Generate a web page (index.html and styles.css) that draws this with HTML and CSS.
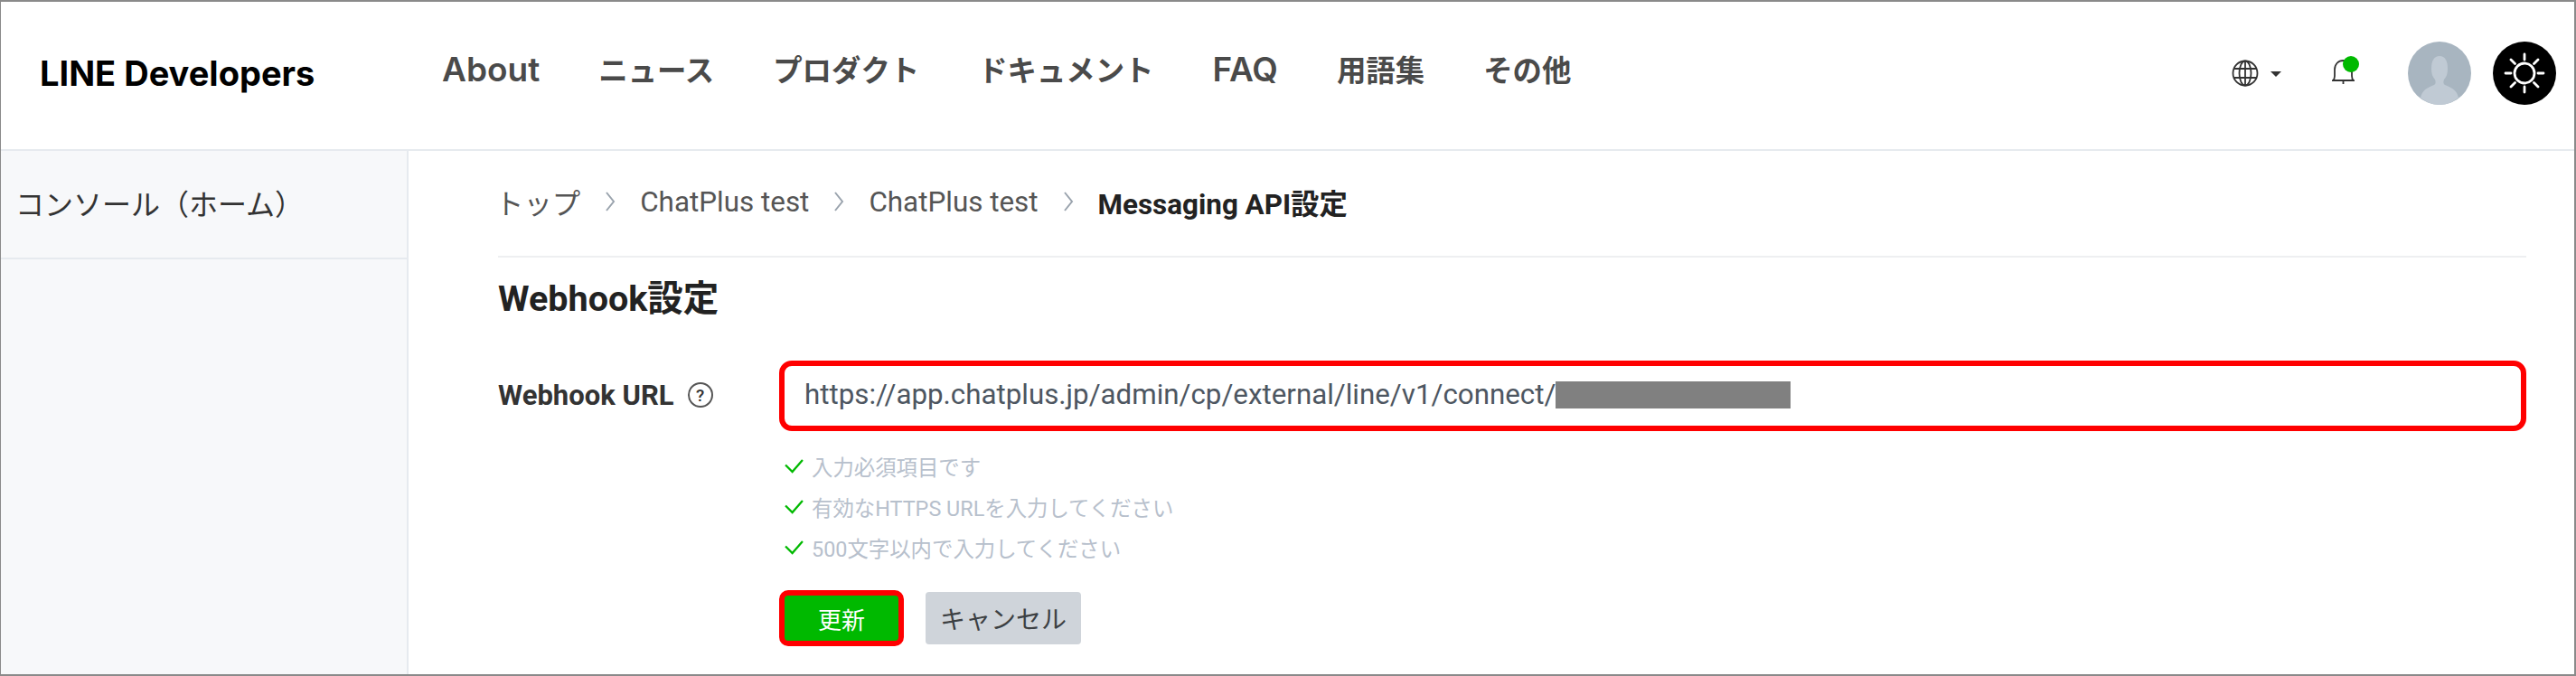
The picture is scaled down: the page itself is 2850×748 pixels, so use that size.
FILE: index.html
```html
<!DOCTYPE html>
<html lang="ja">
<head>
  <meta charset="UTF-8">
  <title>Messaging API設定</title>
  <link rel="stylesheet" href="styles.css">
</head>
<body>
  <div class="frame">
    <div class="navbar">
      <div class="navbar-brand">LINE Developers</div>
      <div class="nav-links">
        <a class="nav-latin" href="#">About</a>
        <a href="#">ニュース</a>
        <a href="#">プロダクト</a>
        <a href="#">ドキュメント</a>
        <a class="nav-latin" href="#">FAQ</a>
        <a href="#">用語集</a>
        <a href="#">その他</a>
      </div>
      <div class="nav-icons">
        <div class="lang">
          <svg class="globe" viewBox="0 0 30 30" fill="none" stroke="#333" stroke-width="1.8">
            <circle cx="15" cy="15" r="13.5"/>
            <ellipse cx="15" cy="15" rx="6.5" ry="13.5"/>
            <path d="M15 1.5v27M2.5 10h25M2.5 20h25"/>
          </svg>
          <span class="caret"></span>
        </div>
        <div class="bell">
          <svg viewBox="0 0 25 28" fill="none" stroke="#333" stroke-width="1.8">
            <path d="M1 23h23c-1.500-1-2-2.500-2-5v-7c0-6-4-10-9.500-10S3 5 3 11v7c0 2.500-.5 4-2 5z"/>
            <path d="M12.500 23v4"/>
          </svg>
          <span class="bell-dot"></span>
        </div>
        <svg class="avatar" viewBox="0 0 70 70">
          <circle cx="35" cy="35" r="35" fill="#a8b5c0"/>
          <path d="M14 62c2-9 8-11 15-14 2-1 2-4 1-6-3-3-4-7-4-12 0-9 3-14 9-14s9 5 9 14c0 5-1 9-4 12-1 2-1 5 1 6 7 3 13 5 15 14-6 5-13 8-21 8s-15-3-21-8z" fill="#c0cad4"/>
        </svg>
        <svg class="theme" viewBox="0 0 70 70">
          <circle cx="35" cy="35" r="35" fill="#000"/>
          <g fill="none" stroke="#fff" stroke-width="2.8" stroke-linecap="round">
            <circle cx="35" cy="35" r="11"/>
            <path d="M35 20v-6M35 56v-6M20 35h-6M56 35h-6M24.500 24.500l-4.500-4.500M50 20l-4.500 4.500M24.500 45.500l-4.500 4.500M50 50l-4.500-4.500"/>
          </g>
        </svg>
      </div>
    </div>

    <div class="main">
      <div class="sidebar">
        <div class="sidebar-item">コンソール（ホーム）</div>
      </div>
      <div class="content">
        <div class="breadcrumb">
          <span class="crumb-first">トップ</span>
          <svg class="chevron" viewBox="0 0 12 24"><path d="M2 2l8 10-8 10"/></svg>
          <span>ChatPlus test</span>
          <svg class="chevron" viewBox="0 0 12 24"><path d="M2 2l8 10-8 10"/></svg>
          <span>ChatPlus test</span>
          <svg class="chevron" viewBox="0 0 12 24"><path d="M2 2l8 10-8 10"/></svg>
          <strong>Messaging API設定</strong>
        </div>
        <h2>Webhook設定</h2>
        <div class="form-row">
          <div class="form-label">
            <span>Webhook URL</span>
            <span class="help">?</span>
          </div>
          <div class="form-body">
            <div class="url-input">
              <span>https://app.chatplus.jp/admin/cp/external/line/v1/connect/</span>
              <span class="redacted"></span>
            </div>
            <ul class="checks">
              <li><svg viewBox="0 0 24 18"><path d="M2 8l8 8L22 2"/></svg>入力必須項目です</li>
              <li><svg viewBox="0 0 24 18"><path d="M2 8l8 8L22 2"/></svg>有効なHTTPS URLを入力してください</li>
              <li><svg viewBox="0 0 24 18"><path d="M2 8l8 8L22 2"/></svg>500文字以内で入力してください</li>
            </ul>
            <div class="buttons">
              <button class="btn-update">更新</button>
              <button class="btn-cancel">キャンセル</button>
            </div>
          </div>
        </div>
      </div>
    </div>
  </div>
</body>
</html>
```

FILE: styles.css
```css
* {
  box-sizing: border-box;
}

body {
  margin: 0;
  font-family: Roboto, "Noto Sans CJK JP", sans-serif;
  background-color: white;
  color: #333;
}

.frame {
  height: 748px;
  border: 2px solid #8a8a8a;
  border-left-width: 1px;
  overflow: hidden;
  display: flex;
  flex-direction: column;
}

.navbar {
  height: 165px;
  flex-shrink: 0;
  display: flex;
  align-items: center;
  border-bottom: 2px solid #e6eaef;
  padding: 0 0 6px 43px;
}

.navbar-brand {
  width: 445px;
  font-family: Inter, sans-serif;
  font-size: 38px;
  font-weight: 700;
  color: #000;
}

.nav-links {
  display: flex;
  align-items: baseline;
  gap: 65px;
  margin-bottom: 8px;
}

.nav-links a {
  font-family: "Noto Sans CJK JP", sans-serif;
  font-size: 32.4px;
  font-weight: 700;
  line-height: 40px;
  color: #4a4a4a;
  text-decoration: none;
}

.nav-links a.nav-latin {
  font-family: Inter, sans-serif;
  font-size: 37px;
  font-weight: 600;
}

.nav-icons {
  margin-left: auto;
  margin-right: 20px;
  display: flex;
  align-items: center;
}

.lang {
  display: flex;
  align-items: center;
  gap: 13px;
}

.globe {
  width: 30px;
  height: 30px;
}

.caret {
  border-left: 6px solid transparent;
  border-right: 6px solid transparent;
  border-top: 6px solid #333;
  margin-top: 3px;
}

.bell {
  position: relative;
  width: 25px;
  height: 28px;
  margin-left: 56px;
  margin-bottom: 2px;
}

.bell svg {
  width: 25px;
  height: 28px;
  display: block;
}

.bell-dot {
  position: absolute;
  top: -4px;
  right: -5px;
  width: 18px;
  height: 18px;
  border-radius: 50%;
  background-color: #00b900;
}

.avatar {
  width: 70px;
  height: 70px;
  margin-left: 59px;
}

.theme {
  width: 70px;
  height: 70px;
  margin-left: 24px;
}

.main {
  flex: 1;
  display: flex;
}

.sidebar {
  width: 451px;
  background-color: #f7f8fa;
  border-right: 2px solid #e6eaef;
}

.sidebar-item {
  height: 120px;
  padding: 34px 0 0 16px;
  border-bottom: 2px solid #e6eaef;
  font-size: 32px;
  color: #333;
}

.content {
  flex: 1;
  padding: 0 53px 0 99px;
}

.breadcrumb {
  height: 118px;
  display: flex;
  align-items: center;
  gap: 27px;
  padding-bottom: 4px;
  border-bottom: 2px solid #eeeff1;
  font-size: 31.4px;
  color: #555;
}

.crumb-first {
  margin-left: -3px;
}

.breadcrumb strong {
  color: #222;
  font-weight: 700;
}

.chevron {
  width: 12px;
  height: 24px;
  fill: none;
  stroke: #9aa3ad;
  stroke-width: 2;
}

h2 {
  margin: 13px 0 0;
  height: 66px;
  font-size: 39.5px;
  font-weight: 700;
  color: #222;
}

.form-row {
  display: flex;
  margin-top: 35px;
}

.form-label {
  width: 311px;
  height: 76px;
  display: flex;
  align-items: center;
  gap: 15px;
  font-size: 31px;
  font-weight: 700;
  color: #333;
}

.help {
  width: 28px;
  height: 28px;
  border: 2px solid #555;
  border-radius: 50%;
  display: flex;
  align-items: center;
  justify-content: center;
  font-size: 19px;
  font-weight: 500;
}

.form-body {
  flex: 1;
}

.url-input {
  height: 78px;
  border: 6px solid #ff0000;
  border-radius: 14px;
  padding: 0 0 3px 22px;
  display: flex;
  align-items: center;
  font-size: 31.3px;
  color: #4d5661;
}

.redacted {
  width: 260px;
  height: 30px;
  background-color: #808080;
}

.checks {
  list-style: none;
  margin: 16px 0 0;
  padding: 0 0 0 5px;
  font-size: 23.4px;
  color: #b7c0cc;
}

.checks li {
  height: 45px;
  display: flex;
  align-items: center;
  gap: 8px;
}

.checks svg {
  width: 23px;
  height: 17px;
  fill: none;
  stroke: #00b900;
  stroke-width: 2.4;
}

.buttons {
  display: flex;
  align-items: center;
  gap: 24px;
  margin-top: 25px;
}

.btn-update {
  width: 138px;
  height: 62px;
  border: 6px solid #ff0000;
  border-radius: 10px;
  background-color: #00b900;
  color: white;
  font-family: inherit;
  font-size: 26px;
}

.btn-cancel {
  width: 172px;
  height: 58px;
  border: none;
  border-radius: 4px;
  background-color: #cfd4da;
  color: #3c4043;
  font-family: inherit;
  font-size: 28px;
}
```
